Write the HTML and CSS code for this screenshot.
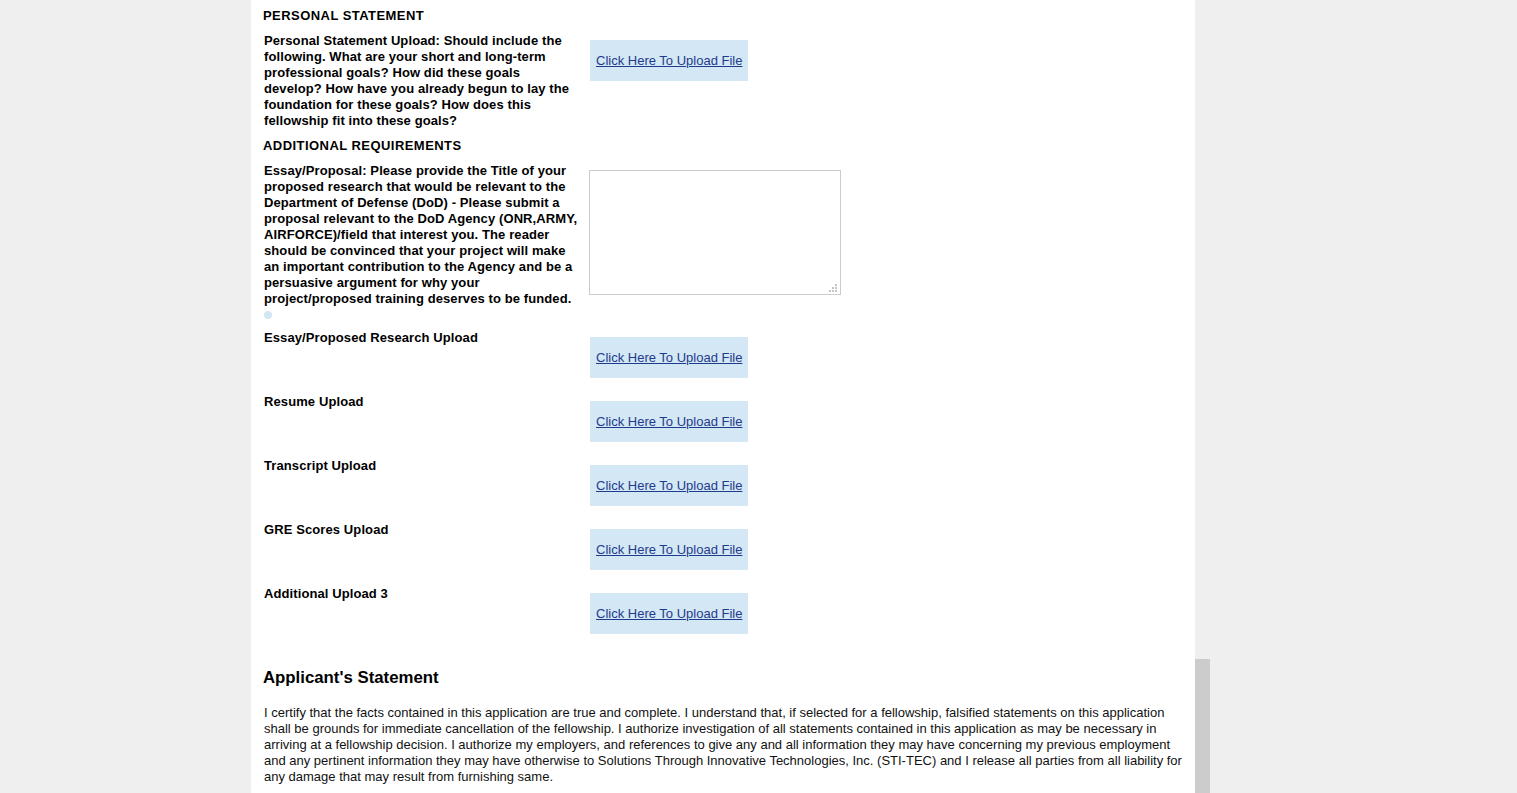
FILE: index.html
```html
<!DOCTYPE html>
<html>
<head>
<meta charset="utf-8">
<link rel="stylesheet" href="styles.css">
</head>
<body>
<div class="shell">
  <main class="page">
    <h3 class="section-title">PERSONAL STATEMENT</h3>
    <div class="row">
      <div class="label">Personal Statement Upload: Should include the following. What are your short and long-term professional goals? How did these goals develop? How have you already begun to lay the foundation for these goals? How does this fellowship fit into these goals?</div>
      <div class="field"><span class="upload"><a href="#">Click Here To Upload File</a></span></div>
    </div>
    <h3 class="section-title">ADDITIONAL REQUIREMENTS</h3>
    <div class="row">
      <div class="label">Essay/Proposal: Please provide the Title of your proposed research that would be relevant to the Department of Defense (DoD) - Please submit a proposal relevant to the DoD Agency (ONR,ARMY, AIRFORCE)/field that interest you. The reader should be convinced that your project will make an important contribution to the Agency and be a persuasive argument for why your project/proposed training deserves to be funded.<span class="dot"></span></div>
      <div class="field">
        <div class="essay-wrap">
          <textarea class="essay"></textarea>
          <svg class="grip" width="9" height="9" viewBox="0 0 9 9"><rect x="6" y="0" width="2" height="2"/><rect x="3" y="3" width="2" height="2"/><rect x="6" y="3" width="2" height="2"/><rect x="0" y="6" width="2" height="2"/><rect x="3" y="6" width="2" height="2"/><rect x="6" y="6" width="2" height="2"/></svg>
        </div>
      </div>
    </div>
    <div class="row upload-row">
      <div class="label">Essay/Proposed Research Upload</div>
      <div class="field"><span class="upload"><a href="#">Click Here To Upload File</a></span></div>
    </div>
    <div class="row upload-row">
      <div class="label">Resume Upload</div>
      <div class="field"><span class="upload"><a href="#">Click Here To Upload File</a></span></div>
    </div>
    <div class="row upload-row">
      <div class="label">Transcript Upload</div>
      <div class="field"><span class="upload"><a href="#">Click Here To Upload File</a></span></div>
    </div>
    <div class="row upload-row">
      <div class="label">GRE Scores Upload</div>
      <div class="field"><span class="upload"><a href="#">Click Here To Upload File</a></span></div>
    </div>
    <div class="row upload-row">
      <div class="label">Additional Upload 3</div>
      <div class="field"><span class="upload"><a href="#">Click Here To Upload File</a></span></div>
    </div>
    <h2 class="statement-title">Applicant's Statement</h2>
    <p class="statement">I certify that the facts contained in this application are true and complete. I understand that, if selected for a fellowship, falsified statements on this application shall be grounds for immediate cancellation of the fellowship. I authorize investigation of all statements contained in this application as may be necessary in arriving at a fellowship decision. I authorize my employers, and references to give any and all information they may have concerning my previous employment and any pertinent information they may have otherwise to Solutions Through Innovative Technologies, Inc. (STI-TEC) and I release all parties from all liability for any damage that may result from furnishing same.</p>
  </main>
  <div class="side-bar"></div>
</div>
</body>
</html>
```

FILE: styles.css
```css
html, body {
  margin: 0;
  padding: 0;
  background: #efefef;
  height: 100%;
  overflow: hidden;
}
body {
  font-family: "Liberation Sans", Arial, sans-serif;
  color: #000;
}
.shell {
  position: relative;
  padding-left: 251px;
  height: 793px;
}
.page {
  width: 918px;
  height: 793px;
  background: #fff;
  padding: 8px 13px 0 13px;
  box-sizing: content-box;
}
.section-title {
  margin: 0 0 9px -1px;
  font-size: 13px;
  line-height: 16px;
  font-weight: bold;
  letter-spacing: 0.45px;
}
.row {
  display: grid;
  grid-template-columns: 316px 1fr;
  column-gap: 10px;
  margin-bottom: 9px;
}
.label {
  font-size: 13px;
  line-height: 16px;
  font-weight: bold;
  color: #000;
  letter-spacing: 0.1px;
}
.dot {
  display: block;
  width: 8px;
  height: 8px;
  border-radius: 50%;
  background: #d3e6f4;
  margin: 4px 0 2px 0;
}
.field {
  padding-top: 7px;
}
.upload-row .field {
  padding-bottom: 7px;
}
.upload {
  display: inline-block;
  background: #d3e7f5;
  padding: 13px 6px;
  font-size: 13px;
  line-height: 15px;
}
.upload a {
  color: #1f3b8c;
  text-decoration: underline;
}
.essay-wrap {
  position: relative;
  width: 252px;
  margin-left: -1px;
}
.essay {
  display: block;
  margin: 0;
  width: 252px;
  height: 125px;
  box-sizing: border-box;
  border: 1px solid #cccccc;
  padding: 2px;
  font-family: "Liberation Sans", Arial, sans-serif;
  resize: none;
  outline: none;
}
.grip {
  position: absolute;
  right: 3px;
  bottom: 2px;
  fill: #c4c4c4;
}
.statement-title {
  margin: 27px 0 0 -1px;
  font-size: 16.8px;
  line-height: 20px;
  font-weight: bold;
}
.statement {
  margin: 17px 0 0 0;
  font-size: 13px;
  line-height: 16px;
  color: #111;
}
.side-bar {
  position: absolute;
  left: 1195px;
  top: 659px;
  width: 15px;
  height: 134px;
  background: #cccccc;
}
```
